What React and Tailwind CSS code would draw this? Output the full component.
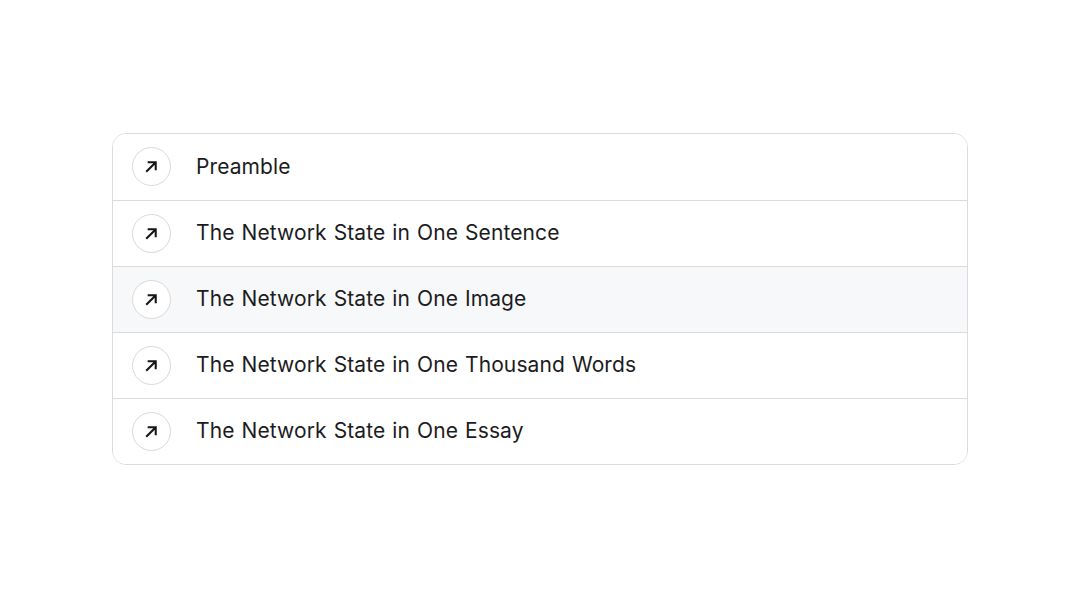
const items = [
  'Preamble',
  'The Network State in One Sentence',
  'The Network State in One Image',
  'The Network State in One Thousand Words',
  'The Network State in One Essay',
];

const ArrowIcon = () => (
  <svg width="13" height="13" viewBox="0 0 12 12" fill="none">
    <path d="M1.8 10.2L9.3 2.7M3.4 2.1H9.9V8.6" stroke="#161616" strokeWidth="1.9" strokeLinecap="square" />
  </svg>
);

export default function App() {
  return (
    <div className="w-[1080px] h-[600px] bg-white flex items-center justify-center" style={{ fontFamily: 'Inter, sans-serif' }}>
      <div className="w-[856px] -mt-[3px] border border-[#dcdcdf] rounded-[14px] overflow-hidden">
        {items.map((title, i) => (
          <div
            key={title}
            className={`h-[66px] flex items-center pl-[19px] gap-[25px] ${i > 0 ? 'border-t border-[#dcdcdf]' : ''} ${i === 2 ? 'bg-[#f7f8fa]' : 'bg-white'}`}
          >
            <div className="w-[39px] h-[39px] rounded-full border border-[#d9d9dc] bg-white flex items-center justify-center">
              <ArrowIcon />
            </div>
            <span className="text-[21px] text-[#1c1c1e] tracking-[0.1px] [word-spacing:1px]">{title}</span>
          </div>
        ))}
      </div>
    </div>
  );
}
